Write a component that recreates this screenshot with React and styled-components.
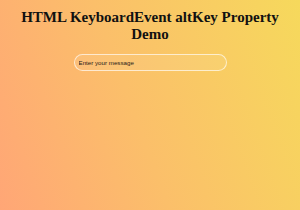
import React from "react";
import styled, { createGlobalStyle } from "styled-components";

const GlobalStyle = createGlobalStyle`
  html, body {
    margin: 0;
    padding: 0;
    height: 100%;
  }
  body {
    background: linear-gradient(70deg, #ffa676 0%, #fbbf6a 45%, #f6d95c 100%);
    background-attachment: fixed;
    font-family: "Liberation Serif", "Times New Roman", serif;
  }
  #root {
    min-height: 100%;
  }
`;

const Page = styled.div`
  display: flex;
  flex-direction: column;
  align-items: center;
  padding: 9px 8px 0;
  min-height: 210px;
  box-sizing: border-box;
`;

const Title = styled.h1`
  margin: 0;
  font-size: 15px;
  line-height: 17px;
  font-weight: bold;
  text-align: center;
  color: #111;
`;

const MessageInput = styled.input`
  margin-top: 11px;
  width: 153px;
  height: 17px;
  box-sizing: border-box;
  padding: 0 4px;
  border: 1px solid rgba(255, 255, 255, 0.65);
  border-radius: 9px;
  background: rgba(255, 255, 255, 0.08);
  font-family: "Liberation Sans", Arial, sans-serif;
  font-size: 6.2px;
  color: #222;
  outline: none;

  &::placeholder {
    color: #2a2016;
  }
`;

const App = () => {
  return (
    <Page>
      <GlobalStyle />
      <Title>HTML KeyboardEvent altKey Property Demo</Title>
      <MessageInput type="text" placeholder="Enter your message" />
    </Page>
  );
};

export default App;
